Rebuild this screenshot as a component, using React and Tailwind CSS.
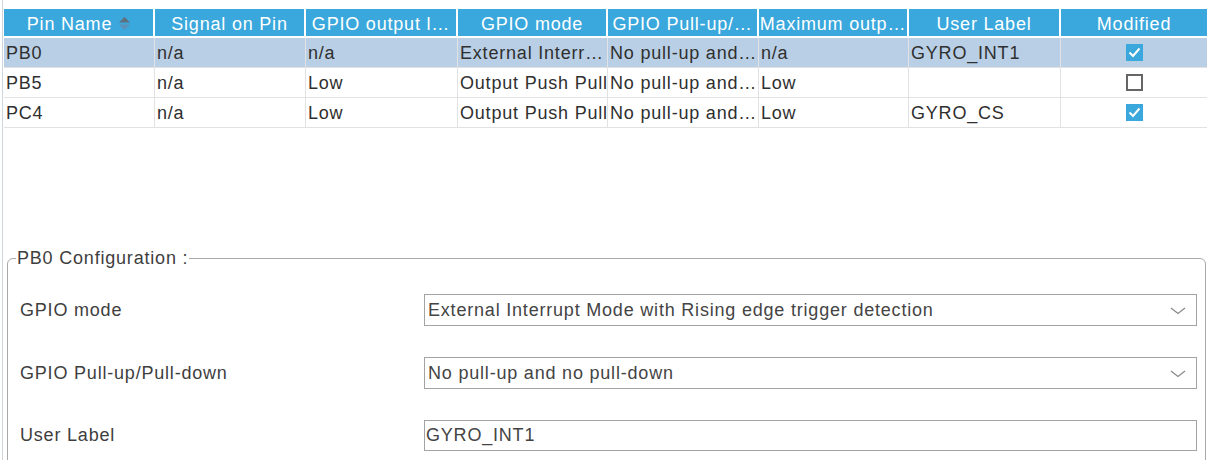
import React from "react";

const font = { fontFamily: '"Liberation Sans", Arial, sans-serif' };

const columns = [
    { title: "Pin Name", width: "w-[151px]", sort: true },
    { title: "Signal on Pin", width: "w-[151px]" },
    { title: "GPIO output l…", width: "w-[152px]" },
    { title: "GPIO mode", width: "w-[150px]" },
    { title: "GPIO Pull-up/…", width: "w-[151px]" },
    { title: "Maximum outp…", width: "w-[150px]" },
    { title: "User Label", width: "w-[152px]" },
    { title: "Modified", width: "flex-1" },
];

const pins = [
    { pin: "PB0", signal: "n/a", level: "n/a", mode: "External Interr…", pull: "No pull-up and…", speed: "n/a", label: "GYRO_INT1", modified: true, selected: true },
    { pin: "PB5", signal: "n/a", level: "Low", mode: "Output Push Pull", pull: "No pull-up and…", speed: "Low", label: "", modified: false },
    { pin: "PC4", signal: "n/a", level: "Low", mode: "Output Push Pull", pull: "No pull-up and…", speed: "Low", label: "GYRO_CS", modified: true },
];

const SortIcon = () => (
    <svg width="11" height="14" viewBox="0 0 11 14" className="ml-[7px]">
        <polygon points="5.5,0 11,5.5 0,5.5" fill="#5f6f7c" />
        <polygon points="0,7.5 11,7.5 5.5,13" fill="#5b91b8" />
    </svg>
);

const Check = ({ checked }) =>
    checked ? (
        <div className="w-[17px] h-[17px] bg-[#3aa8dc] flex items-center justify-center">
            <svg width="13" height="11" viewBox="0 0 13 11">
                <polyline points="1.5,5.5 5,9 11.5,1.5" fill="none" stroke="white" strokeWidth="2" />
            </svg>
        </div>
    ) : (
        <div className="w-[17px] h-[17px] bg-white border-2 border-[#666666]"></div>
    );

const Chevron = () => (
    <svg width="16" height="8" viewBox="0 0 16 8">
        <polyline points="1,1 8,6.5 15,1" fill="none" stroke="#8a8a8a" strokeWidth="1.3" />
    </svg>
);

const Cell = ({ width, children }) => (
    <div className={`${width} h-full flex items-center pl-[2px] pt-[2px] whitespace-nowrap overflow-hidden border-r border-[#e2e2e2]`}>
        {children}
    </div>
);

const FormRow = ({ label, children, className }) => (
    <div className={`flex items-center h-[32px] ${className || ""}`}>
        <div className="w-[404px] text-[#3e3e3e]">{label}</div>
        <div className="flex-1">{children}</div>
    </div>
);

const App = () => {
    return (
        <div className="w-[1207px] h-[460px] overflow-hidden bg-white pl-[2px] text-[18px] tracking-[0.8px]" style={font}>
            <div className="h-full border-l border-[#cfd6de] pl-[1px]">
                {/* pin table */}
                <div className="pt-[9px]">
                    <div className="flex h-[27px] bg-[#3aa8dc] text-white">
                        {columns.map((col, i) => (
                            <div
                                key={col.title}
                                className={`${col.width} h-full flex items-center justify-center pt-[3px] whitespace-nowrap overflow-hidden ${i < columns.length - 1 ? "border-r-2 border-white" : ""}`}
                            >
                                <span>{col.title}</span>
                                {col.sort && <SortIcon />}
                            </div>
                        ))}
                    </div>
                    <div className="h-[2px]"></div>
                    {pins.map((p) => (
                        <div
                            key={p.pin}
                            className={`flex h-[30px] border-b border-[#e2e2e2] text-[#2f2f2f] ${p.selected ? "bg-[#b9cfe5]" : "bg-white"}`}
                        >
                            <Cell width="w-[151px]">{p.pin}</Cell>
                            <Cell width="w-[151px]">{p.signal}</Cell>
                            <Cell width="w-[152px]">{p.level}</Cell>
                            <Cell width="w-[150px]">{p.mode}</Cell>
                            <Cell width="w-[151px]">{p.pull}</Cell>
                            <Cell width="w-[150px]">{p.speed}</Cell>
                            <Cell width="w-[152px]">{p.label}</Cell>
                            <div className="flex-1 h-full flex items-center justify-center">
                                <Check checked={p.modified} />
                            </div>
                        </div>
                    ))}
                </div>

                {/* configuration panel */}
                <fieldset className="mt-[117px] ml-[3px] mr-[1px] border border-[#a9a9a9] rounded-[6px] pl-[8px] pr-[8px] pt-[22px] pb-[40px]">
                    <legend className="px-[1px] text-[#3e3e3e]">PB0 Configuration :</legend>
                    <div className="pl-[4px]">
                        <FormRow label="GPIO mode">
                            <div className="h-[32px] border border-[#a3a3a3] flex items-center justify-between pl-[3px] pt-[1px] pr-[10px] text-[#444444]">
                                <span>External Interrupt Mode with Rising edge trigger detection</span>
                                <Chevron />
                            </div>
                        </FormRow>
                        <FormRow label="GPIO Pull-up/Pull-down" className="mt-[31px]">
                            <div className="h-[32px] border border-[#a3a3a3] flex items-center justify-between pl-[3px] pt-[1px] pr-[10px] text-[#444444]">
                                <span>No pull-up and no pull-down</span>
                                <Chevron />
                            </div>
                        </FormRow>
                        <FormRow label="User Label" className="mt-[30px]">
                            <div className="h-[31px] border border-[#a3a3a3] flex items-center pl-[1px] pt-[1px] text-[#444444]">
                                GYRO_INT1
                            </div>
                        </FormRow>
                    </div>
                </fieldset>
            </div>
        </div>
    );
};

export default App;
